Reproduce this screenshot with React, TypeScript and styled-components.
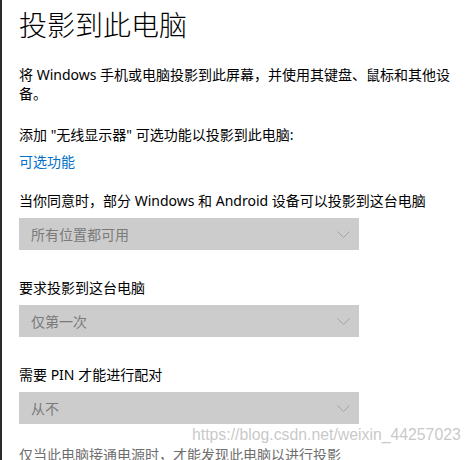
import React from 'react';
import styled, { createGlobalStyle } from 'styled-components';

const GlobalStyle = createGlobalStyle`
  html, body {
    margin: 0;
    padding: 0;
    background: #ffffff;
  }
  body {
    font-family: "Noto Sans", "Noto Sans CJK SC", sans-serif;
    color: #000000;
  }
`;

const Page = styled.main`
  position: relative;
  width: 471px;
  height: 460px;
  box-sizing: border-box;
  overflow: hidden;
  border-left: 2px solid #2b2b2b;
  padding: 0 15px 0 17px;
  background: #ffffff;
`;

const Title = styled.h1`
  margin: 5px 0 0 0;
  font-size: 28px;
  line-height: 40px;
  font-weight: 300;
  letter-spacing: 0;
`;

const Text = styled.p<{ $gap?: number; $muted?: boolean }>`
  margin: ${(p) => p.$gap ?? 0}px 0 0 0;
  font-size: 14px;
  line-height: 19px;
  color: ${(p) => (p.$muted ? '#6e6e6e' : '#000000')};
`;

const Label = styled.div<{ $gap?: number }>`
  margin-top: ${(p) => p.$gap ?? 28}px;
  font-size: 14px;
  line-height: 20px;
`;

const LinkText = styled.a`
  display: block;
  margin-top: 7px;
  font-size: 14px;
  line-height: 20px;
  color: #0070cc;
  text-decoration: none;
`;

const Select = styled.div`
  display: flex;
  align-items: center;
  justify-content: space-between;
  box-sizing: border-box;
  width: 340px;
  height: 32px;
  margin-top: 7px;
  padding: 0 9px 0 12px;
  background: #cccccc;
  color: #7a7a7a;
  font-size: 14px;
`;

const Watermark = styled.span`
  position: absolute;
  left: 190px;
  top: 425px;
  font-family: "Liberation Sans", Arial, sans-serif;
  font-size: 15.8px;
  line-height: 20px;
  color: rgba(190, 190, 190, 0.85);
  white-space: nowrap;
  pointer-events: none;
`;

const Chevron = () => (
  <svg width="13" height="7" viewBox="0 0 13 7" fill="none">
    <polyline points="0.5,0.5 6.5,6.5 12.5,0.5" stroke="#a3a3a3" strokeWidth="1" />
  </svg>
);

const Dropdown = ({ value }: { value: string }) => (
  <Select>
    <span>{value}</span>
    <Chevron />
  </Select>
);

export default function App() {
  return (
    <>
      <GlobalStyle />
      <Page>
        <Title>投影到此电脑</Title>
        <Text $gap={20}>
          将 Windows 手机或电脑投影到此屏幕，并使用其键盘、鼠标和其他设备。
        </Text>
        <Label $gap={22}>添加 "无线显示器" 可选功能以投影到此电脑:</Label>
        <LinkText href="#">可选功能</LinkText>

        <Label $gap={19}>当你同意时，部分 Windows 和 Android 设备可以投影到这台电脑</Label>
        <Dropdown value="所有位置都可用" />

        <Label>要求投影到这台电脑</Label>
        <Dropdown value="仅第一次" />

        <Label>需要 PIN 才能进行配对</Label>
        <Dropdown value="从不" />

        <Text $gap={21} $muted>
          仅当此电脑接通电源时，才能发现此电脑以进行投影
        </Text>
        <Watermark>https://blog.csdn.net/weixin_44257023</Watermark>
      </Page>
    </>
  );
}
